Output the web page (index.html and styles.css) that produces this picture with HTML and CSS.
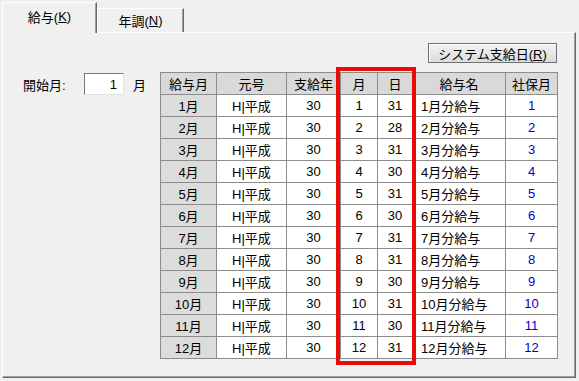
FILE: index.html
```html
<!DOCTYPE html>
<html lang="ja">

<head>
  <meta charset="UTF-8">
  <title>給与設定</title>
  <link rel="stylesheet" href="styles.css">
</head>

<body>

  <div class="tabs">
    <div class="tab active">給与(<u>K</u>)</div>
    <div class="tab">年調(<u>N</u>)</div>
  </div>

  <div class="panel">
    <div class="toolbar">
      <button class="sys-btn">システム支給日(<u>R</u>)</button>
    </div>

    <div class="main">
      <div class="start">
        <span class="start-label">開始月:</span>
        <input class="start-input" type="text" value="1">
        <span class="start-unit">月</span>
      </div>

      <div class="grid-wrap">
        <table class="grid">
          <thead>
            <tr>
              <th class="c-month">給与月</th>
              <th class="c-era">元号</th>
              <th class="c-year">支給年</th>
              <th class="c-m">月</th>
              <th class="c-d">日</th>
              <th class="c-name">給与名</th>
              <th class="c-sho">社保月</th>
            </tr>
          </thead>
          <tbody id="rows"></tbody>
        </table>
        <div class="highlight"></div>
      </div>
    </div>
  </div>

  <script>
    // 各月の支給日
    const days = [31, 28, 31, 30, 31, 30, 31, 31, 30, 31, 30, 31];
    const tbody = document.getElementById("rows");

    days.forEach((d, i) => {
      const m = i + 1;
      const tr = document.createElement("tr");
      tr.innerHTML =
        `<td class="row-head">${m}月</td>` +
        `<td>H|平成</td>` +
        `<td>30</td>` +
        `<td>${m}</td>` +
        `<td>${d}</td>` +
        `<td class="left">${m}月分給与</td>` +
        `<td class="blue">${m}</td>`;
      tbody.appendChild(tr);
    });
  </script>
</body>

</html>
```

FILE: styles.css
```css
body {
  margin: 0;
  background: #f0f0f0;
  font-family: "Liberation Sans", "Noto Sans CJK JP", sans-serif;
  font-size: 13px;
  color: #000;
}

/* タブ */
.tabs {
  display: flex;
  align-items: flex-end;
  height: 32px;
  padding-left: 2px;
}

.tab {
  box-sizing: border-box;
  width: 87px;
  height: 24px;
  display: flex;
  align-items: center;
  justify-content: center;
  background: #f0f0f0;
  border-top: 1px solid #fff;
  border-left: 1px solid #fff;
  border-right: 1px solid #696969;
  box-shadow: inset -1px 0 0 #a0a0a0;
}

.tab.active {
  width: 95px;
  height: 31px;
  margin-bottom: -1px;
  padding-bottom: 4px;
  position: relative;
  z-index: 1;
}

/* パネル */
.panel {
  box-sizing: border-box;
  margin-left: 2px;
  width: 574px;
  height: 346px;
  border-top: 1px solid #fff;
  border-left: 1px solid #fff;
  border-right: 1px solid #696969;
  border-bottom: 1px solid #696969;
  box-shadow: inset -1px -1px 0 #a0a0a0;
  padding: 10px 18px 0 20px;
}

.toolbar {
  display: flex;
  justify-content: flex-end;
}

.sys-btn {
  box-sizing: border-box;
  width: 129px;
  height: 20px;
  padding: 0;
  font-family: inherit;
  font-size: 13px;
  color: #000;
  background: linear-gradient(#f2f2f2, #dcdcdc);
  border: 1px solid #707070;
  box-shadow: inset 1px 1px 0 #fff;
}

.main {
  display: flex;
  margin-top: 9px;
}

.start {
  display: flex;
  align-items: center;
  flex-shrink: 0;
  width: 137px;
  height: 24px;
}

.start-label {
  width: 61px;
}

.start-input {
  box-sizing: border-box;
  width: 40px;
  height: 22px;
  margin: 0;
  padding: 0 6px;
  text-align: right;
  font-family: inherit;
  font-size: 13px;
  background: #fff;
  border: 1px solid #7a7a7a;
  border-right-color: #e3e3e3;
  border-bottom-color: #e3e3e3;
}

.start-unit {
  margin-left: 9px;
}

/* 表 */
.grid-wrap {
  position: relative;
  flex-shrink: 0;
}

.grid {
  border-collapse: collapse;
  table-layout: fixed;
  background: #fff;
}

.grid th,
.grid td {
  height: 21px;
  padding: 0;
  border: 1px solid #8c8c8c;
  text-align: center;
  font-weight: normal;
  white-space: nowrap;
  overflow: hidden;
}

.grid th {
  background: #d9d9d9;
}

.c-month { width: 55px; }
.c-era { width: 69px; }
.c-year { width: 53px; }
.c-m { width: 36px; }
.c-d { width: 34px; }
.c-name { width: 92px; }
.c-sho { width: 51px; }

.grid td.row-head {
  background: #dcdcdc;
}

.grid td.left {
  text-align: left;
  padding-left: 8px;
}

.grid td.blue {
  color: #0000cc;
}

/* 赤枠 */
.highlight {
  position: absolute;
  left: 176px;
  top: -5px;
  width: 80px;
  height: 298px;
  box-sizing: border-box;
  border: 4px solid #ea0a0a;
  pointer-events: none;
}
```
